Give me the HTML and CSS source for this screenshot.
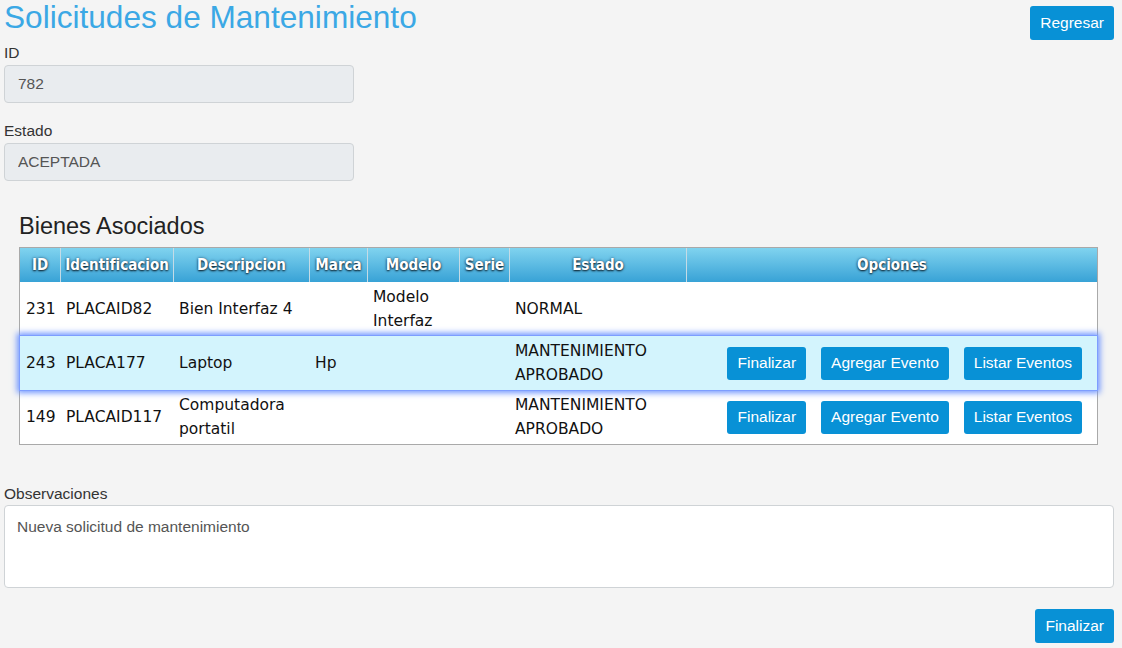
FILE: index.html
```html
<!DOCTYPE html>
<html lang="es">
<head>
<meta charset="utf-8">
<title>Solicitudes de Mantenimiento</title>
<link rel="stylesheet" href="styles.css">
</head>
<body>
<div class="page">
  <div class="top">
    <h1 class="title">Solicitudes de Mantenimiento</h1>
    <button class="btn">Regresar</button>
  </div>

  <div class="field first">
    <label class="lbl">ID</label>
    <input class="control" type="text" value="782" readonly>
  </div>
  <div class="field">
    <label class="lbl">Estado</label>
    <input class="control" type="text" value="ACEPTADA" readonly>
  </div>

  <div class="bienes">
    <h3 class="subtitle">Bienes Asociados</h3>
    <div class="grid">
      <div class="row head">
        <div class="c">ID</div>
        <div class="c">Identificacion</div>
        <div class="c">Descripcion</div>
        <div class="c">Marca</div>
        <div class="c">Modelo</div>
        <div class="c">Serie</div>
        <div class="c">Estado</div>
        <div class="c">Opciones</div>
      </div>
      <div class="row body">
        <div class="c">231</div>
        <div class="c">PLACAID82</div>
        <div class="c desc">Bien Interfaz 4</div>
        <div class="c"></div>
        <div class="c">Modelo Interfaz</div>
        <div class="c"></div>
        <div class="c">NORMAL</div>
        <div class="c ops"></div>
      </div>
      <div class="row body sel">
        <div class="c">243</div>
        <div class="c">PLACA177</div>
        <div class="c desc">Laptop</div>
        <div class="c">Hp</div>
        <div class="c"></div>
        <div class="c"></div>
        <div class="c">MANTENIMIENTO APROBADO</div>
        <div class="c ops">
          <button class="btn sm">Finalizar</button>
          <button class="btn sm">Agregar Evento</button>
          <button class="btn sm">Listar Eventos</button>
        </div>
      </div>
      <div class="row body">
        <div class="c">149</div>
        <div class="c">PLACAID117</div>
        <div class="c desc">Computadora portatil</div>
        <div class="c"></div>
        <div class="c"></div>
        <div class="c"></div>
        <div class="c">MANTENIMIENTO APROBADO</div>
        <div class="c ops">
          <button class="btn sm">Finalizar</button>
          <button class="btn sm">Agregar Evento</button>
          <button class="btn sm">Listar Eventos</button>
        </div>
      </div>
    </div>
  </div>

  <div class="obs">
    <label class="lbl">Observaciones</label>
    <textarea class="area" readonly>Nueva solicitud de mantenimiento</textarea>
  </div>

  <div class="foot">
    <button class="btn">Finalizar</button>
  </div>
</div>
</body>
</html>
```
FILE: styles.css
```css
body {
  margin: 0;
  background: #f4f4f4;
  font-family: "Liberation Sans", Arial, sans-serif;
  font-size: 15.5px;
  color: #333;
}

.page {
  padding: 0 8px 0 4px;
}

.top {
  display: flex;
  justify-content: space-between;
  align-items: flex-start;
}

.title {
  margin: 0;
  font-size: 31.6px;
  line-height: 34px;
  font-weight: normal;
  color: #3ba8e5;
}

.btn {
  background: #0891d6;
  color: #fff;
  border: none;
  border-radius: 3px;
  font-family: "Liberation Sans", Arial, sans-serif;
  font-size: 15.5px;
  height: 34px;
  padding: 0 10px;
  margin: 0;
}

.top .btn {
  margin-top: 6px;
}

.field {
  margin-top: 18px;
}

.field.first {
  margin-top: 3px;
}

.lbl {
  display: block;
  line-height: 20px;
  margin-bottom: 2px;
  color: #333;
}

.control {
  display: block;
  width: 350px;
  height: 38px;
  box-sizing: border-box;
  border: 1px solid #cfd3d6;
  border-radius: 4px;
  background: #e9ecef;
  padding: 0 13px;
  margin: 0;
  color: #555;
  font-family: "Liberation Sans", Arial, sans-serif;
  font-size: 15.5px;
}

.bienes {
  margin-top: 31px;
  padding: 0 16px 0 15px;
}

.subtitle {
  margin: 0 0 7px;
  font-size: 23.5px;
  line-height: 28px;
  font-weight: normal;
  color: #222;
}

.grid {
  border: 1px solid #a9a9a9;
  background: #fff;
}

.row {
  display: grid;
  grid-template-columns: 40px 113px 136px 58px 92px 50px 177px 1fr;
  height: 54px;
}

.row.head {
  height: 34px;
  background: linear-gradient(#80d3ef, #38a2d6);
}

.head .c {
  border-left: 1px solid #c4dbe6;
  color: #fff;
  font-family: "DejaVu Sans Condensed", "DejaVu Sans", sans-serif;
  font-weight: bold;
  font-size: 15px;
  display: flex;
  align-items: center;
  justify-content: center;
  text-shadow: 0 1px 2px rgba(0, 0, 0, 0.8), 0 0 3px rgba(0, 40, 80, 0.6);
}

.head .c:first-child {
  border-left: none;
}

.body .c {
  display: flex;
  align-items: center;
  padding: 0 2px 0 6px;
  font-family: "DejaVu Sans", sans-serif;
  font-size: 15.5px;
  line-height: 24px;
  color: #111;
}

.body .c.desc {
  padding-right: 0;
}

.body .c.ops {
  justify-content: flex-end;
  gap: 15px;
  padding-right: 15px;
}

.btn.sm {
  height: 33px;
}

.row.sel {
  background: #d3f4fd;
  position: relative;
  z-index: 1;
  box-shadow: 0 0 0 1px #7d9dff, 0 0 6px 3px #7096ff;
}

.obs {
  margin-top: 39px;
}

.obs .lbl {
  margin-bottom: 1px;
}

.area {
  display: block;
  width: 100%;
  height: 83px;
  box-sizing: border-box;
  border: 1px solid #cfd3d6;
  border-radius: 4px;
  padding: 11px 12px;
  margin: 0;
  background: #fff;
  color: #555;
  font-family: "Liberation Sans", Arial, sans-serif;
  font-size: 15.5px;
  line-height: 20px;
  resize: none;
}

.foot {
  display: flex;
  justify-content: flex-end;
  margin-top: 21px;
}
```
